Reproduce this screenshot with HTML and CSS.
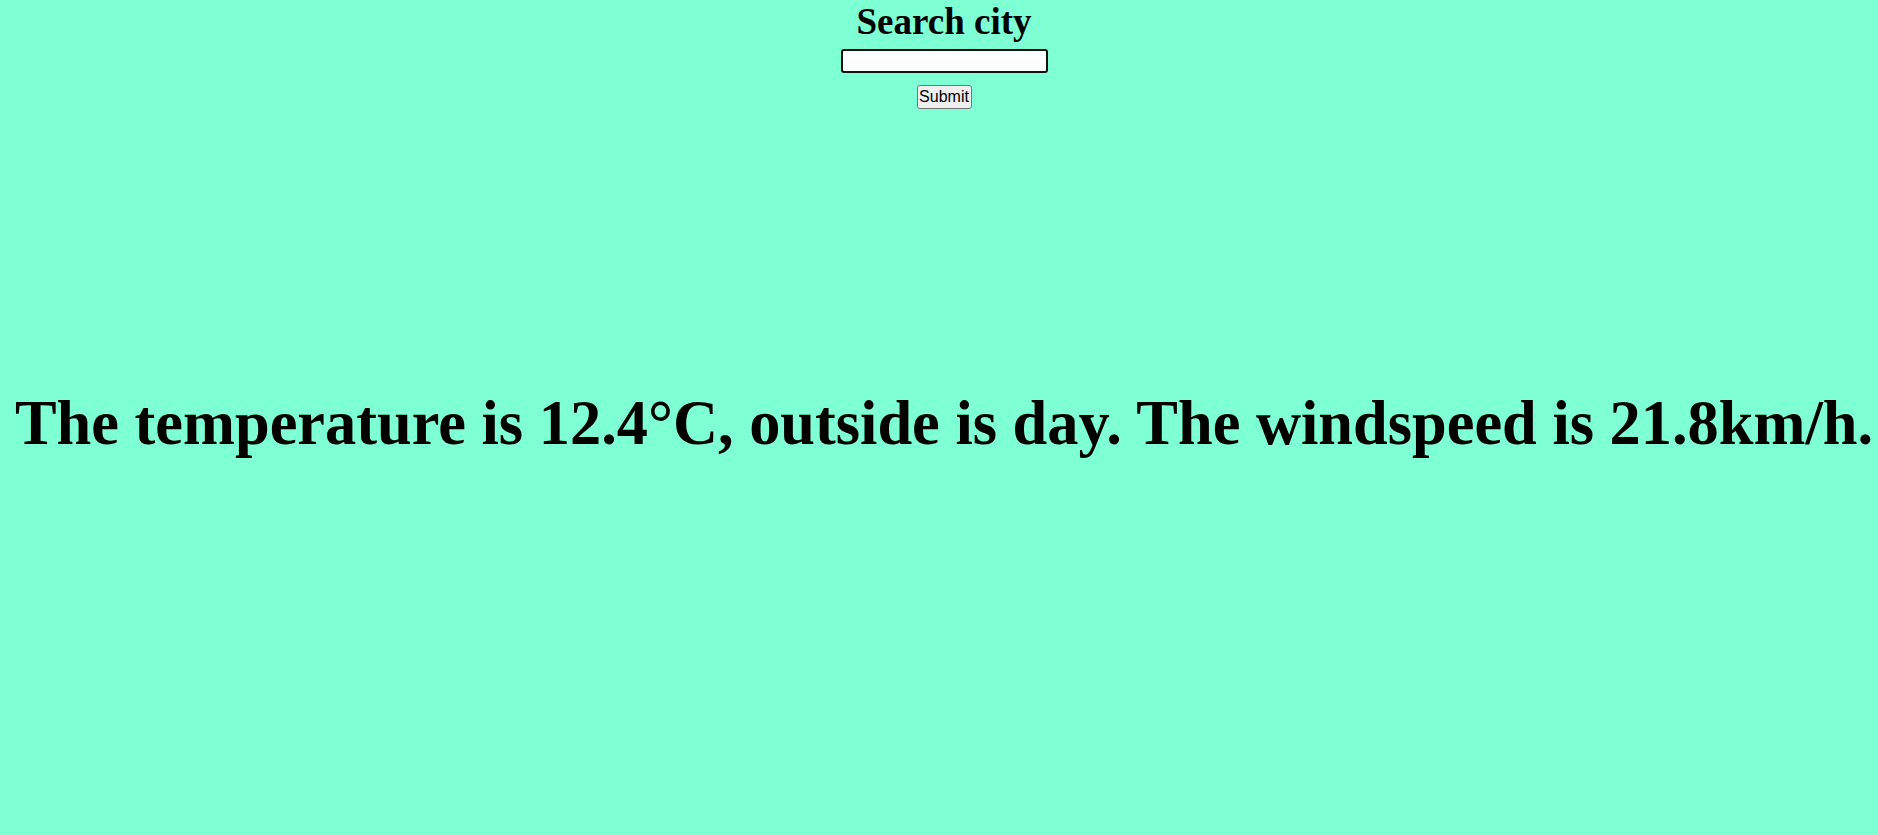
FILE: index.html
```html
<!DOCTYPE html>
<html>
<head>
<meta charset="utf-8">
<link rel="stylesheet" href="styles.css">
</head>
<body>
<div class="page">
  <form class="search">
    <h1 class="title">Search city</h1>
    <input class="city" type="text">
    <button class="submit" type="button">Submit</button>
  </form>
  <div class="result">
    <h1 class="weather">The temperature is 12.4°C, outside is day. The windspeed is 21.8km/h.</h1>
  </div>
</div>
</body>
</html>
```
FILE: styles.css
```css
html, body {
  margin: 0;
  padding: 0;
  background: #7fffd4;
  font-family: "Liberation Serif", "Times New Roman", serif;
  color: #000;
}
.page {
  display: flex;
  flex-direction: column;
  align-items: center;
  min-height: 835px;
  padding-left: 10px;
}
.search {
  display: flex;
  flex-direction: column;
  align-items: center;
}
.title {
  font-size: 37px;
  font-weight: bold;
  margin: 0;
  padding-top: 3px;
  line-height: 37px;
}
.city {
  box-sizing: border-box;
  width: 207px;
  height: 24px;
  margin-top: 9px;
  border: 2px solid #111;
  border-radius: 3px;
  background: #fff;
  padding: 0 2px;
  font-family: "Liberation Sans", Arial, sans-serif;
  font-size: 16px;
}
.submit {
  box-sizing: border-box;
  width: 55px;
  height: 24px;
  margin-top: 12px;
  background: #efefef;
  border: 1px solid #767676;
  border-radius: 3px;
  padding: 0;
  font-family: "Liberation Sans", Arial, sans-serif;
  font-size: 16px;
  color: #000;
}
.result {
  margin-top: 278px;
  width: 100%;
  text-align: center;
}
.weather {
  margin: 0;
  font-size: 62.4px;
  font-weight: bold;
  line-height: 72px;
  white-space: nowrap;
}
```
